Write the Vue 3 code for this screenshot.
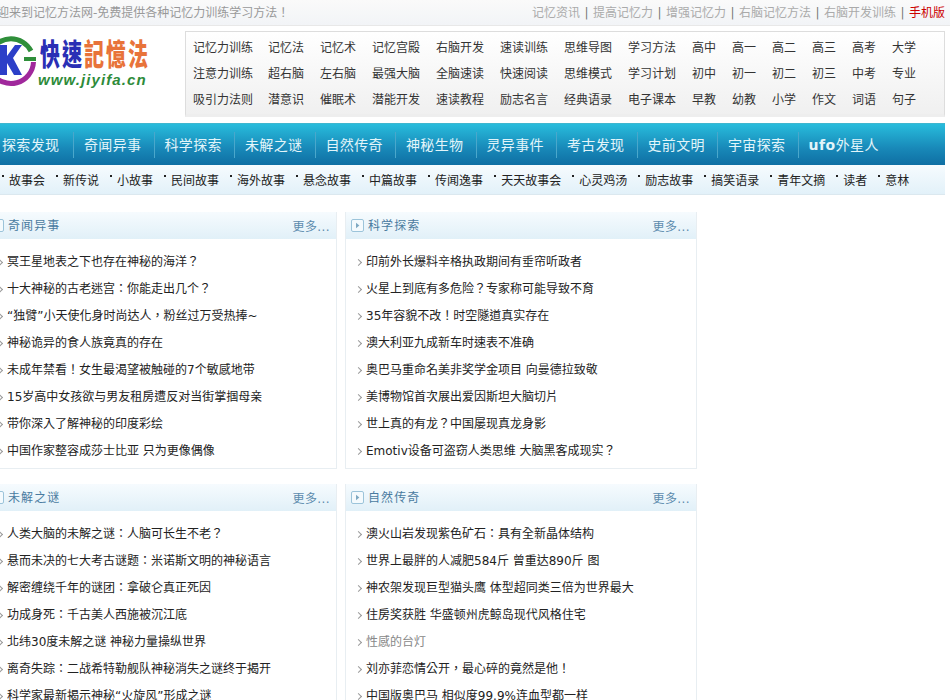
<script setup>
const topLinks = ['记忆资讯', '提高记忆力', '增强记忆力', '右脑记忆方法', '右脑开发训练']
const menu = [
  ['记忆力训练', '记忆法', '记忆术', '记忆宫殿', '右脑开发', '速读训练', '思维导图', '学习方法', '高中', '高一', '高二', '高三', '高考', '大学'],
  ['注意力训练', '超右脑', '左右脑', '最强大脑', '全脑速读', '快速阅读', '思维模式', '学习计划', '初中', '初一', '初二', '初三', '中考', '专业'],
  ['吸引力法则', '潜意识', '催眠术', '潜能开发', '速读教程', '励志名言', '经典语录', '电子课本', '早教', '幼教', '小学', '作文', '词语', '句子'],
].flat()
const nav = ['探索发现', '奇闻异事', '科学探索', '未解之谜', '自然传奇', '神秘生物', '灵异事件', '考古发现', '史前文明', '宇宙探索']
const sub = ['故事会', '新传说', '小故事', '民间故事', '海外故事', '悬念故事', '中篇故事', '传闻逸事', '天天故事会', '心灵鸡汤', '励志故事', '搞笑语录', '青年文摘', '读者', '意林']
const panels = [
  { title: '奇闻异事', items: ['冥王星地表之下也存在神秘的海洋？', '十大神秘的古老迷宫：你能走出几个？', '“独臂”小天使化身时尚达人，粉丝过万受热捧~', '神秘诡异的食人族竟真的存在', '未成年禁看！女生最渴望被触碰的7个敏感地带', '15岁高中女孩欲与男友租房遭反对当街掌掴母亲', '带你深入了解神秘的印度彩绘', '中国作家整容成莎士比亚 只为更像偶像'] },
  { title: '科学探索', items: ['印前外长爆料辛格执政期间有垂帘听政者', '火星上到底有多危险？专家称可能导致不育', '35年容貌不改！时空隧道真实存在', '澳大利亚九成新车时速表不准确', '奥巴马重命名美非奖学金项目 向曼德拉致敬', '美博物馆首次展出爱因斯坦大脑切片', '世上真的有龙？中国屡现真龙身影', 'Emotiv设备可盗窃人类思维 大脑黑客成现实？'] },
  { title: '未解之谜', items: ['人类大脑的未解之谜：人脑可长生不老？', '悬而未决的七大考古谜题：米诺斯文明的神秘语言', '解密缠绕千年的谜团：拿破仑真正死因', '功成身死：千古美人西施被沉江底', '北纬30度未解之谜 神秘力量操纵世界', '离奇失踪：二战希特勒舰队神秘消失之谜终于揭开', '科学家最新揭示神秘“火旋风”形成之谜'] },
  { title: '自然传奇', items: ['澳火山岩发现紫色矿石：具有全新晶体结构', '世界上最胖的人减肥584斤 曾重达890斤 图', '神农架发现巨型猫头鹰 体型超同类三倍为世界最大', '住房奖获胜 华盛顿州虎鲸岛现代风格住宅', '性感的台灯', '刘亦菲恋情公开，最心碎的竟然是他！', '中国版奥巴马 相似度99.9%连血型都一样'] },
]
</script>

<template>
  <div class="viewport">
    <div class="page">
      <div class="topbar">
        <span class="welcome">欢迎来到记忆方法网-免费提供各种记忆力训练学习方法！</span>
        <div class="toplinks">
          <template v-for="t in topLinks" :key="t"><a>{{ t }}</a><i>|</i></template>
          <a class="mobile">手机版</a>
        </div>
      </div>

      <div class="header">
        <div class="logo">
          <svg class="logo-mark" width="55" height="65" viewBox="-15 26 55 65">
            <path d="M-9 51 A22.5 22.5 0 0 1 31 51" fill="none" stroke="#2f8f3a" stroke-width="5"/>
            <path d="M33.5 62 A22.5 22.5 0 0 1 -8 73" fill="none" stroke="#a0289c" stroke-width="5"/>
            <path d="M24 59 H36" fill="none" stroke="#2f8f3a" stroke-width="4"/>
            <path d="M0 45 H7 V56 L15 45 H22 L13 58 L22 75 H14 L7 63 V75 H0 Z" fill="#2c3fc8"/>
          </svg>
          <div class="logo-text">
            <div class="logo-cn"><span class="blue">快速</span><span class="orange">記憶法</span></div>
            <div class="logo-url">www.jiyifa.cn</div>
          </div>
        </div>
        <div class="menu">
          <a v-for="(m, i) in menu" :key="i">{{ m }}</a>
        </div>
      </div>

      <div class="nav">
        <a v-for="n in nav" :key="n">{{ n }}</a>
        <a><b>ufo</b>外星人</a>
      </div>

      <div class="subnav">
        <a v-for="s in sub" :key="s">{{ s }}</a>
      </div>

      <div class="panels">
        <section v-for="p in panels" :key="p.title" class="panel">
          <header class="panel-head">
            <svg class="panel-icon" width="13" height="13" viewBox="0 0 13 13">
              <rect x=".5" y=".5" width="12" height="12" rx="1.5" fill="#f4fafd" stroke="#9cc4da"/>
              <path d="M5 3.8 L8.4 6.5 L5 9.2 Z" fill="#7fa9c2"/>
            </svg>
            <h3>{{ p.title }}</h3>
            <span class="more">更多...</span>
          </header>
          <ul>
            <li v-for="it in p.items" :key="it" :class="{ muted: it === '性感的台灯' }">{{ it }}</li>
          </ul>
        </section>
      </div>
    </div>
  </div>
</template>

<style>
html, body { margin: 0; background: #fff; overflow: hidden; }
</style>

<style scoped>
.viewport { width: 950px; height: 700px; overflow: hidden; }
.page {
  width: 965px;
  margin-left: -15px;
  font: 12px/1 "DejaVu Sans", "Noto Sans CJK SC", sans-serif;
  color: #333;
}
.topbar {
  height: 25px;
  display: flex;
  align-items: center;
  justify-content: space-between;
  padding-right: 5px;
  background: linear-gradient(#fafafa, #f2f4f7);
  border-bottom: 1px solid #e8e8e8;
}
.welcome { color: #999; font-family: "DejaVu Sans", "Noto Sans CJK TC", sans-serif; }
.toplinks { display: flex; align-items: center; color: #aaa; }
.toplinks i { font-style: normal; color: #777; width: 13px; text-align: center; }
.toplinks .mobile { color: #c00; }
.header { display: flex; height: 96px; box-sizing: border-box; }
.logo { width: 200px; display: flex; flex: none; }
.logo-mark { flex: none; }
.logo-text { padding-top: 17px; }
.logo-cn {
  font: 900 20px/20px "Noto Sans CJK TC", sans-serif;
  letter-spacing: 2px;
  white-space: nowrap;
  transform: scaleY(1.5);
}
.blue { color: #2a2fb5; }
.orange { color: #e8733a; }
.logo-url {
  font: italic 700 15px/16px "Liberation Sans", sans-serif;
  color: #2e8b3a;
  letter-spacing: 1.1px;
  margin: 9px 0 0 -2px;
}
.menu {
  width: 760px;
  height: 86px;
  flex: none;
  margin-top: 5px;
  box-sizing: border-box;
  border: 1px solid #ddd;
  border-bottom: 3px solid #eee;
  background: linear-gradient(#fff, #f0f0f0);
  padding: 3px 0 0 7px;
  display: grid;
  grid-template-columns: 75px 52px 52px 64px 64px 64px 64px 64px 40px 40px 40px 40px 40px 40px;
  grid-auto-rows: 26px;
  align-items: center;
  color: #333;
  white-space: nowrap;
}
.nav {
  width: 960px;
  height: 42px;
  margin-top: 1px;
  box-sizing: border-box;
  border-top: 1px solid #3fb6cf;
  background: linear-gradient(#28bcdc, #1888b8 60%, #0f6fa3);
  display: flex;
  align-items: center;
  font-size: 14px;
  letter-spacing: .35px;
  color: #e2f5fa;
  padding-left: 17px;
}
.nav a { padding: 0 12px 0 10px; width: 57.5px; white-space: nowrap; height: 26px; line-height: 27px; border-left: 1px solid #4aa7cb; }
.nav a:first-child { border-left: 0; padding: 0 13px 0 0; width: 58px; }
.nav b { font-family: "DejaVu Sans", sans-serif; letter-spacing: .5px; }
.subnav {
  width: 960px;
  height: 30px;
  box-sizing: border-box;
  display: flex;
  align-items: center;
  padding: 2px 0 0 17px;
  background: linear-gradient(#f6fbfe, #e2f1f9);
  border-bottom: 1px solid #dbe8ef;
  color: #222;
  white-space: nowrap;
}
.subnav a { display: flex; margin-right: 11px; }
.subnav a::before {
  content: "";
  width: 2px;
  height: 2px;
  background: #222;
  margin: 0 5px 0 0;
}
.panels {
  display: grid;
  grid-template-columns: 352px 352px;
  column-gap: 8px;
  row-gap: 15px;
  padding-top: 17px;
}
.panel {
  height: 257px;
  box-sizing: border-box;
  border: 1px solid #e8eef2;
  border-top: 0;
}
.panel-head {
  height: 27px;
  display: flex;
  align-items: center;
  padding: 0 6px 0 5px;
  background: linear-gradient(#f6fbfe, #e1f0f8);
  color: #4a7ba0;
}
.panel-icon { flex: none; }
.panel-head h3 { font: inherit; letter-spacing: 1.1px; margin: 0 0 0 4px; flex: 1; }
.more { color: #5d8cae; letter-spacing: .4px; padding-top: 2px; }
ul {
  list-style: none;
  margin: 0;
  padding: 10px 0 0 20px;
  color: #222;
  font-family: "DejaVu Sans", "Noto Sans CJK TC", sans-serif;
}
.panel:nth-child(odd) ul { padding-left: 21px; }
li { height: 27px; line-height: 27px; position: relative; white-space: nowrap; }
li.muted { color: #888; }
li::before {
  content: "";
  position: absolute;
  left: -10px;
  top: 11px;
  width: 4px;
  height: 4px;
  border: solid #999;
  border-width: 1px 1px 0 0;
  transform: rotate(45deg);
}
</style>
